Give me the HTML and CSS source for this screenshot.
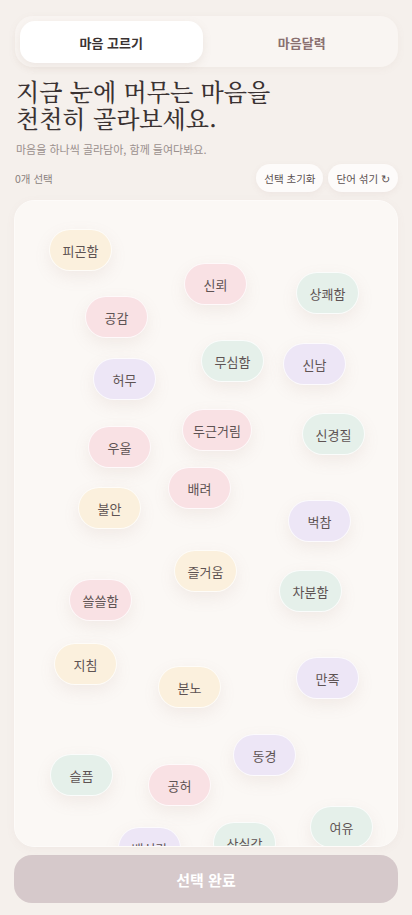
FILE: index.html
```html
<!DOCTYPE html>
<html lang="ko">
<head>
<meta charset="utf-8">
<meta name="viewport" content="width=device-width, initial-scale=1">
<title>마음 고르기</title>
<link rel="stylesheet" href="styles.css">
</head>
<body>
<div class="app">
  <nav class="seg">
    <button class="seg-tab active">마음 고르기</button>
    <button class="seg-tab">마음달력</button>
  </nav>
  <h1 class="title">지금 눈에 머무는 마음을<br>천천히 골라보세요.</h1>
  <p class="sub">마음을 하나씩 골라담아, 함께 들여다봐요.</p>
  <div class="actions">
    <span class="count">0개 선택</span>
    <div class="btns">
      <button class="pill">선택 초기화</button>
      <button class="pill">단어 섞기 ↻</button>
    </div>
  </div>
  <section class="canvas">
    <span class="chip yellow" style="left:34px;top:28px">피곤함</span>
    <span class="chip pink" style="left:169px;top:62px">신뢰</span>
    <span class="chip mint" style="left:281px;top:71px">상쾌함</span>
    <span class="chip pink" style="left:70px;top:95px">공감</span>
    <span class="chip mint" style="left:186px;top:139px">무심함</span>
    <span class="chip lav" style="left:268px;top:142px">신남</span>
    <span class="chip lav" style="left:78px;top:157px">허무</span>
    <span class="chip pink" style="left:167px;top:208px">두근거림</span>
    <span class="chip mint" style="left:287px;top:212px">신경질</span>
    <span class="chip pink" style="left:73px;top:225px">우울</span>
    <span class="chip pink" style="left:153px;top:266px">배려</span>
    <span class="chip yellow" style="left:63px;top:286px">불안</span>
    <span class="chip lav" style="left:273px;top:299px">벅참</span>
    <span class="chip yellow" style="left:159px;top:349px">즐거움</span>
    <span class="chip mint" style="left:264px;top:369px">차분함</span>
    <span class="chip pink" style="left:54px;top:378px">쓸쓸함</span>
    <span class="chip yellow" style="left:39px;top:442px">지침</span>
    <span class="chip yellow" style="left:143px;top:465px">분노</span>
    <span class="chip lav" style="left:281px;top:456px">만족</span>
    <span class="chip lav" style="left:218px;top:533px">동경</span>
    <span class="chip mint" style="left:35px;top:553px">슬픔</span>
    <span class="chip pink" style="left:133px;top:563px">공허</span>
    <span class="chip mint" style="left:295px;top:605px">여유</span>
    <span class="chip lav" style="left:103px;top:626px">배신감</span>
    <span class="chip mint" style="left:198px;top:621px">상실감</span>
  </section>
  <button class="done">선택 완료</button>
</div>
</body>
</html>
```

FILE: styles.css
```css
* { box-sizing: border-box; }
html, body { margin: 0; padding: 0; }
body {
  background: #f5f0ec;
  font-family: "Noto Sans CJK KR", "Noto Sans", sans-serif;
  color: #3d3535;
}
.app {
  width: 412px;
  height: 915px;
  padding: 16px 14px 11px;
  display: flex;
  flex-direction: column;
}
button { font-family: inherit; border: 0; cursor: pointer; }
.seg {
  display: grid;
  grid-template-columns: 1fr 1fr;
  gap: 8px;
  height: 51px;
  padding: 5px 5px 4px;
  margin-left: 1px;
  background: #f9f5f2;
  border-radius: 18px;
  box-shadow: 0 2px 8px rgba(150, 120, 110, 0.06);
}
.seg-tab {
  background: transparent;
  border-radius: 15px;
  font-size: 13px;
  font-weight: 700;
  color: #8a7070;
}
.seg-tab.active {
  background: #ffffff;
  color: #3a3232;
  box-shadow: 0 3px 10px rgba(150, 120, 110, 0.12);
}
.title {
  margin: 10px 0 0 2px;
  font-family: "Noto Serif CJK KR", "Nanum Myeongjo", "Noto Sans CJK KR", serif;
  font-size: 24px;
  line-height: 27px;
  font-weight: 500;
  letter-spacing: 0;
  color: #3a3232;
}
.sub {
  margin: 11px 0 0 2px;
  font-size: 11px;
  line-height: 14px;
  color: #9a8f8c;
}
.actions {
  margin-top: 8px;
  height: 28px;
  display: flex;
  align-items: center;
  justify-content: space-between;
}
.count {
  font-size: 10.5px;
  color: #8a7f7c;
  margin-left: 1px;
}
.btns { display: flex; gap: 5px; }
.pill {
  height: 28px;
  padding: 0 8px;
  border-radius: 14px;
  background: #fdfbfa;
  font-size: 10.5px;
  color: #5a4f4f;
  box-shadow: 0 2px 6px rgba(150, 120, 110, 0.08);
}
.canvas {
  position: relative;
  margin-top: 8px;
  height: 647px;
  background: #fbf8f5;
  border: 1px solid #fdfbf9;
  border-radius: 20px;
  overflow: hidden;
  box-shadow: 0 2px 10px rgba(150, 120, 110, 0.05);
}
.chip {
  position: absolute;
  height: 42px;
  min-width: 63px;
  padding: 0 10px;
  border-radius: 21px;
  display: flex;
  align-items: center;
  justify-content: center;
  font-size: 13px;
  color: #5e5353;
  border: 1.5px solid rgba(255, 255, 255, 0.8);
  box-shadow: 0 6px 16px rgba(170, 140, 130, 0.12);
  white-space: nowrap;
}
.yellow { background: #fbf0dd; }
.pink { background: #f9e1e4; }
.mint { background: #e5f0ea; }
.lav { background: #ede6f6; }
.done {
  margin-top: 8px;
  height: 48px;
  border-radius: 18px;
  background: #d6c9cb;
  color: #ffffff;
  font-size: 15px;
  font-weight: 700;
}
```
